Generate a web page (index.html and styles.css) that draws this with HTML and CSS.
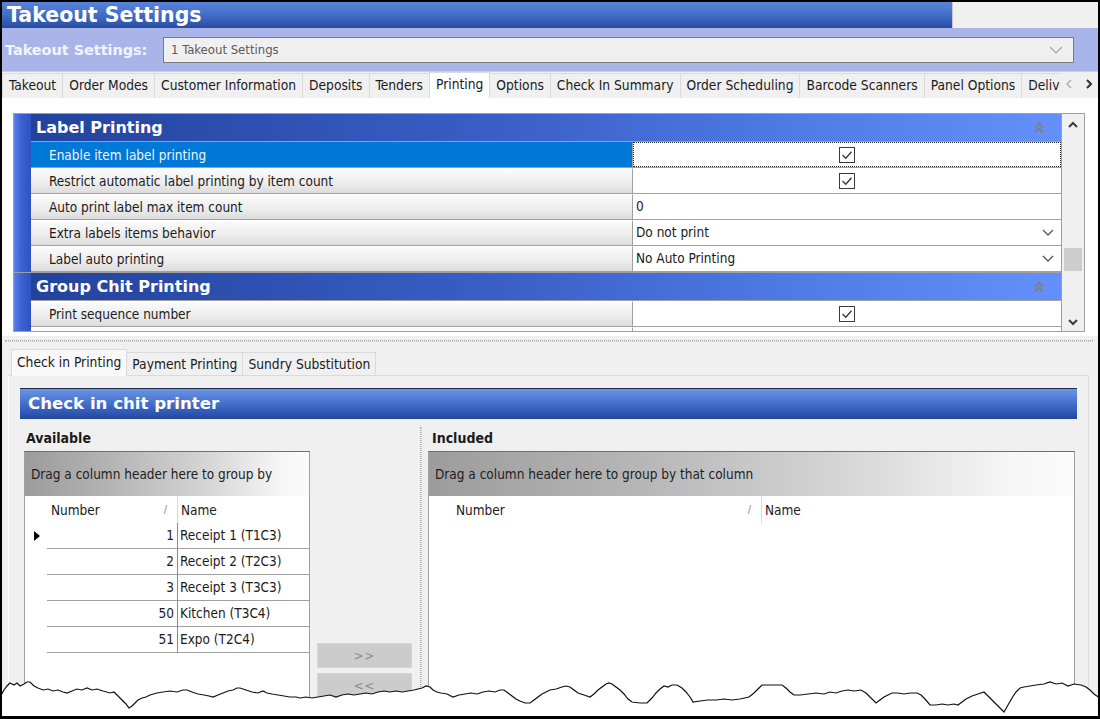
FILE: index.html
```html
<!DOCTYPE html>
<html>
<head>
<meta charset="utf-8">
<title>Takeout Settings</title>
<link rel="stylesheet" href="styles.css">
</head>
<body>
<div class="frame">
  <header class="titlebar">
    <div class="title">Takeout Settings</div>
    <div class="title-rest"></div>
  </header>

  <div class="selector">
    <span class="sel-label">Takeout Settings:</span>
    <div class="combo">
      <span class="combo-text">1 Takeout Settings</span>
      <svg class="combo-chev" width="14" height="8" viewBox="0 0 14 8"><path d="M1 1 L7 7 L13 1"/></svg>
    </div>
  </div>

  <nav class="tabbar">
    <div class="tabs">
      <div class="tab">Takeout</div>
      <div class="tab">Order Modes</div>
      <div class="tab">Customer Information</div>
      <div class="tab">Deposits</div>
      <div class="tab">Tenders</div>
      <div class="tab active">Printing</div>
      <div class="tab">Options</div>
      <div class="tab">Check In Summary</div>
      <div class="tab">Order Scheduling</div>
      <div class="tab">Barcode Scanners</div>
      <div class="tab">Panel Options</div>
      <div class="tab">Delivery</div>
    </div>
    <div class="tab-arrows">
      <svg class="arr-left" width="8" height="10" viewBox="0 0 8 10"><path d="M6 1 L2 5 L6 9"/></svg>
      <svg class="arr-right" width="8" height="10" viewBox="0 0 8 10"><path d="M2 1 L6 5 L2 9"/></svg>
    </div>
  </nav>

  <section class="top-page">
    <div class="pgrid">
      <div class="pg-main">
        <div class="pg-cat">
          <div class="gutter"></div>
          <div class="cat-title"><span>Label Printing</span>
            <svg class="collapse" width="10" height="12" viewBox="0 0 10 12"><path d="M1 5.5 L5 1.5 L9 5.5 M1 10.5 L5 6.5 L9 10.5"/></svg>
          </div>
        </div>
        <div class="pg-row selected">
          <div class="gutter"></div>
          <div class="pg-label">Enable item label printing</div>
          <div class="pg-value center"><div class="focus">
            <svg class="check" width="16" height="16" viewBox="0 0 16 16"><rect x="0.5" y="0.5" width="15" height="15"/><path d="M3.5 8 L6.8 11.2 L12.5 4.8"/></svg>
          </div></div>
        </div>
        <div class="pg-row">
          <div class="gutter"></div>
          <div class="pg-label">Restrict automatic label printing by item count</div>
          <div class="pg-value center">
            <svg class="check" width="16" height="16" viewBox="0 0 16 16"><rect x="0.5" y="0.5" width="15" height="15"/><path d="M3.5 8 L6.8 11.2 L12.5 4.8"/></svg>
          </div>
        </div>
        <div class="pg-row">
          <div class="gutter"></div>
          <div class="pg-label">Auto print label max item count</div>
          <div class="pg-value">0</div>
        </div>
        <div class="pg-row">
          <div class="gutter"></div>
          <div class="pg-label">Extra labels items behavior</div>
          <div class="pg-value drop"><span>Do not print</span>
            <svg class="dd" width="12" height="7" viewBox="0 0 12 7"><path d="M1 1 L6 6 L11 1"/></svg>
          </div>
        </div>
        <div class="pg-row">
          <div class="gutter"></div>
          <div class="pg-label">Label auto printing</div>
          <div class="pg-value drop"><span>No Auto Printing</span>
            <svg class="dd" width="12" height="7" viewBox="0 0 12 7"><path d="M1 1 L6 6 L11 1"/></svg>
          </div>
        </div>
        <div class="pg-cat sep">
          <div class="gutter"></div>
          <div class="cat-title"><span>Group Chit Printing</span>
            <svg class="collapse" width="10" height="12" viewBox="0 0 10 12"><path d="M1 5.5 L5 1.5 L9 5.5 M1 10.5 L5 6.5 L9 10.5"/></svg>
          </div>
        </div>
        <div class="pg-row">
          <div class="gutter"></div>
          <div class="pg-label">Print sequence number</div>
          <div class="pg-value center">
            <svg class="check" width="16" height="16" viewBox="0 0 16 16"><rect x="0.5" y="0.5" width="15" height="15"/><path d="M3.5 8 L6.8 11.2 L12.5 4.8"/></svg>
          </div>
        </div>
        <div class="pg-row">
          <div class="gutter"></div>
          <div class="pg-label"></div>
          <div class="pg-value"></div>
        </div>
      </div>
      <div class="vscroll">
        <svg class="sarrow" width="12" height="8" viewBox="0 0 12 8"><path d="M2 6 L6 2 L10 6"/></svg>
        <div class="strack"><div class="sthumb"></div></div>
        <svg class="sarrow" width="12" height="8" viewBox="0 0 12 8"><path d="M2 2 L6 6 L10 2"/></svg>
      </div>
    </div>
  </section>

  <div class="hsplit"><div class="dots"></div></div>

  <section class="bottom">
    <div class="btabs">
      <div class="btab active">Check in Printing</div>
      <div class="btab">Payment Printing</div>
      <div class="btab">Sundry Substitution</div>
    </div>
    <div class="bpage">
      <div class="section-head">Check in chit printer</div>
      <div class="panels">
        <div class="panel panel-left">
          <div class="panel-title">Available</div>
          <div class="panel-body">
            <div class="lgrid avail">
              <div class="gp">Drag a column header here to group by</div>
              <div class="ghead">
                <div class="ind"></div>
                <div class="hnum"><span>Number</span><span class="sort">/</span></div>
                <div class="hname">Name</div>
              </div>
              <div class="grow"><div class="ind"><svg width="6" height="10" viewBox="0 0 6 10"><path d="M0 0 L6 5 L0 10 Z"/></svg></div><div class="num">1</div><div class="name">Receipt 1 (T1C3)</div></div>
              <div class="grow"><div class="ind"></div><div class="num">2</div><div class="name">Receipt 2 (T2C3)</div></div>
              <div class="grow"><div class="ind"></div><div class="num">3</div><div class="name">Receipt 3 (T3C3)</div></div>
              <div class="grow"><div class="ind"></div><div class="num">50</div><div class="name">Kitchen (T3C4)</div></div>
              <div class="grow"><div class="ind"></div><div class="num">51</div><div class="name">Expo (T2C4)</div></div>
            </div>
            <div class="move-btns">
              <div class="mbtn">&gt;&gt;</div>
              <div class="mbtn">&lt;&lt;</div>
            </div>
          </div>
        </div>
        <div class="vsplit"><div class="vdots"></div></div>
        <div class="panel panel-right">
          <div class="panel-title">Included</div>
          <div class="lgrid incl">
            <div class="gp">Drag a column header here to group by that column</div>
            <div class="ghead">
              <div class="ind"></div>
              <div class="hnum"><span>Number</span><span class="sort">/</span></div>
              <div class="hname">Name</div>
            </div>
          </div>
        </div>
      </div>
    </div>
  </section>

  <svg class="torn" width="1100" height="719" viewBox="0 0 1100 719">
    <polygon class="torn-fill" points="0,697 4,690 7,686 10,683 14,685 17,683 20,686 24,684 27,682 30,682 34,686 38,688 43,690 48,689 53,691 58,690 63,692 67,693 72,691 77,689 82,690 87,688 92,690 97,689 103,691 110,693 114,692 118,696 122,700 126,704 129,708 132,706 135,703 138,700 142,698 146,697 150,695 157,693 163,692 170,691 177,692 183,690 187,690 192,692 198,694 204,695 209,696 213,697 218,695 223,693 228,691 233,690 237,688 240,688 246,690 252,692 258,693 263,691 267,693 272,694 278,695 284,696 290,697 296,697 300,698 306,697 312,698 318,697 324,696 330,695 336,697 342,695 348,694 354,695 360,694 366,693 372,694 378,692 384,691 390,692 396,691 402,692 408,691 414,690 418,689 422,688 426,686 430,687 433,690 437,692 441,693 447,694 453,697 459,695 465,694 471,693 477,694 483,692 489,691 495,692 500,690 504,690 508,693 512,696 516,699 520,701 525,703 530,703 534,700 538,697 542,694 546,692 550,690 556,689 562,687 566,686 570,687 574,690 578,693 584,695 590,697 594,694 598,690 602,687 606,684 609,683 612,684 616,687 620,690 624,694 628,699 632,702 640,703 647,703 652,698 656,693 660,689 664,686 668,687 672,685 677,685 682,688 686,692 690,697 693,702 700,701 708,700 716,700 724,699 732,700 740,699 749,697 754,693 758,689 762,685 770,685 778,685 782,685 786,688 790,692 794,695 800,695 808,694 816,693 824,694 830,692 836,693 842,691 848,690 854,691 861,690 866,693 871,698 876,703 880,700 884,697 888,695 892,693 898,693 904,694 910,693 917,693 921,695 925,699 930,705 936,705 942,704 948,705 954,704 958,705 962,702 966,699 972,696 978,694 984,692 988,696 992,700 996,704 1000,708 1004,712 1008,705 1012,698 1016,692 1020,688 1024,687 1030,686 1036,685 1044,684 1050,682 1056,684 1062,683 1068,686 1074,684 1081,685 1086,687 1090,690 1094,694 1100,698 1100,719 0,719"/>
    <polyline class="torn-line" points="0,697 4,690 7,686 10,683 14,685 17,683 20,686 24,684 27,682 30,682 34,686 38,688 43,690 48,689 53,691 58,690 63,692 67,693 72,691 77,689 82,690 87,688 92,690 97,689 103,691 110,693 114,692 118,696 122,700 126,704 129,708 132,706 135,703 138,700 142,698 146,697 150,695 157,693 163,692 170,691 177,692 183,690 187,690 192,692 198,694 204,695 209,696 213,697 218,695 223,693 228,691 233,690 237,688 240,688 246,690 252,692 258,693 263,691 267,693 272,694 278,695 284,696 290,697 296,697 300,698 306,697 312,698 318,697 324,696 330,695 336,697 342,695 348,694 354,695 360,694 366,693 372,694 378,692 384,691 390,692 396,691 402,692 408,691 414,690 418,689 422,688 426,686 430,687 433,690 437,692 441,693 447,694 453,697 459,695 465,694 471,693 477,694 483,692 489,691 495,692 500,690 504,690 508,693 512,696 516,699 520,701 525,703 530,703 534,700 538,697 542,694 546,692 550,690 556,689 562,687 566,686 570,687 574,690 578,693 584,695 590,697 594,694 598,690 602,687 606,684 609,683 612,684 616,687 620,690 624,694 628,699 632,702 640,703 647,703 652,698 656,693 660,689 664,686 668,687 672,685 677,685 682,688 686,692 690,697 693,702 700,701 708,700 716,700 724,699 732,700 740,699 749,697 754,693 758,689 762,685 770,685 778,685 782,685 786,688 790,692 794,695 800,695 808,694 816,693 824,694 830,692 836,693 842,691 848,690 854,691 861,690 866,693 871,698 876,703 880,700 884,697 888,695 892,693 898,693 904,694 910,693 917,693 921,695 925,699 930,705 936,705 942,704 948,705 954,704 958,705 962,702 966,699 972,696 978,694 984,692 988,696 992,700 996,704 1000,708 1004,712 1008,705 1012,698 1016,692 1020,688 1024,687 1030,686 1036,685 1044,684 1050,682 1056,684 1062,683 1068,686 1074,684 1081,685 1086,687 1090,690 1094,694 1100,698"/>
  </svg>
</div>
</body>
</html>
```

FILE: styles.css
```css
* { box-sizing: border-box; margin: 0; padding: 0; }

html, body {
  width: 1100px;
  height: 719px;
  overflow: hidden;
  background: #000;
}

body {
  font-family: "DejaVu Sans Condensed", "DejaVu Sans", sans-serif;
  font-size: 13.5px;
  color: #1b1b1b;
}

.frame {
  position: relative;
  width: 1100px;
  height: 719px;
  border: 2px solid #000;
  border-bottom-width: 3px;
  background: #f0f0f0;
  overflow: hidden;
  display: flex;
  flex-direction: column;
}

/* ---------- title bar ---------- */
.titlebar {
  height: 26px;
  flex: none;
  display: flex;
}
.title {
  width: 950px;
  background: linear-gradient(#5a84da, #4470cc 45%, #2f56ad 85%, #2a4a98);
  color: #fff;
  font-family: "DejaVu Sans", sans-serif;
  font-weight: bold;
  font-size: 20.5px;
  line-height: 26px;
  padding-left: 5px;
  white-space: nowrap;
}
.title-rest {
  flex: 1;
  background: #f0f0f0;
  border-left: 1px solid #c8c8c8;
}

/* ---------- selector band ---------- */
.selector {
  height: 44px;
  flex: none;
  background: #a9b5e9;
  display: flex;
  align-items: center;
  border-bottom: 1px solid #c6cdf0;
}
.sel-label {
  width: 161px;
  padding-left: 3px;
  font-family: "DejaVu Sans", sans-serif;
  font-weight: bold;
  font-size: 14.4px;
  color: #f2f4fd;
  white-space: nowrap;
}
.combo {
  width: 911px;
  height: 26px;
  background: #f0f0f0;
  border: 1px solid #7b7b7b;
  display: flex;
  align-items: center;
  justify-content: space-between;
  padding: 0 10px 0 7px;
  color: #5a5a5a;
  font-size: 13px;
}
.combo-chev path { fill: none; stroke: #a2a2a2; stroke-width: 1.2; }

/* ---------- main tabs ---------- */
.tabbar {
  height: 26px;
  flex: none;
  display: flex;
  background: #f0f0f0;
}
.tabs {
  width: 1058px;
  overflow: hidden;
  display: flex;
  align-items: flex-end;
  white-space: nowrap;
  font-size: 13.7px;
}
.tab {
  flex: none;
  height: 25px;
  line-height: 23px;
  padding: 0 6px;
  border: 1px solid #dadada;
  border-bottom: none;
  margin-right: -1px;
  background: #f0f0f0;
}
.tab.active {
  height: 26px;
  line-height: 22px;
  background: #fff;
  position: relative;
  z-index: 1;
}
.tab-arrows {
  flex: 1;
  display: flex;
  align-items: center;
  justify-content: space-between;
  padding: 0 5px 2px 5px;
}
.tab-arrows path { fill: none; stroke-width: 1.5; }
.arr-left path { stroke: #b0b0b0; }
.arr-right path { stroke: #303030; stroke-width: 2; }

/* ---------- top page with property grid ---------- */
.top-page {
  height: 238px;
  flex: none;
  background: #fff;
  padding: 15px 0 0 11px;
}
.pgrid {
  width: 1072px;
  height: 219px;
  border: 1px solid #a0a0a0;
  display: flex;
  overflow: hidden;
}
.pg-main {
  width: 1047px;
  flex: none;
  overflow: hidden;
}
.gutter {
  width: 17px;
  flex: none;
  background: linear-gradient(to right, #5c80ea, #3c62d4 40%, #2f52bd);
}
.pg-cat {
  display: flex;
  height: 28px;
}
.pg-cat.sep {
  height: 29px;
  border-top: 1px solid #a0a0a0;
}
.cat-title {
  flex: 1;
  display: flex;
  align-items: center;
  justify-content: space-between;
  padding: 0 17px 0 5px;
  background: linear-gradient(to right, #22439c, #3a5ec6 45%, #5381ea 80%, #6391f9);
  border-bottom: 1px solid #a0a0a0;
  color: #fff;
  font-family: "DejaVu Sans", sans-serif;
  font-weight: bold;
  font-size: 16px;
}
.collapse path { fill: none; stroke: #7d7f8a; stroke-width: 2; }

.pg-row {
  display: flex;
  height: 26px;
}
.pg-label {
  width: 602px;
  flex: none;
  padding-left: 18px;
  line-height: 25px;
  background: linear-gradient(#fbfbfb, #ececec 60%, #dcdcdc);
  border-top: 1px solid #fff;
  border-right: 1px solid #a0a0a0;
  border-bottom: 1px solid #a0a0a0;
  white-space: nowrap;
}
.pg-row.selected .pg-label {
  background: #0078d7;
  color: #eef4ff;
  border-top-color: #0078d7;
}
.pg-value {
  flex: 1;
  background: #fff;
  border-bottom: 1px solid #a0a0a0;
  padding-left: 3px;
  line-height: 25px;
  display: flex;
  align-items: center;
}
.pg-value.center { justify-content: center; padding-left: 0; }
.pg-value.drop { justify-content: space-between; padding-right: 7px; }
.focus {
  width: 100%;
  height: 100%;
  border: 1px dotted #222;
  display: flex;
  align-items: center;
  justify-content: center;
}
.check rect { fill: #fff; stroke: #3a3a3a; }
.check path { fill: none; stroke: #3a3a3a; stroke-width: 1.4; }
.dd path { fill: none; stroke: #555; stroke-width: 1.3; }

.vscroll {
  flex: 1;
  background: #f0f0f0;
  border-left: 1px solid #a0a0a0;
  display: flex;
  flex-direction: column;
  align-items: center;
  padding: 7px 0 5px;
}
.sarrow path { fill: none; stroke: #3c3c3c; stroke-width: 2; }
.strack {
  flex: 1;
  width: 100%;
  padding: 0 2px;
  display: flex;
  flex-direction: column;
  justify-content: flex-end;
  padding-bottom: 47px;
}
.sthumb {
  height: 23px;
  background: #cdcdcd;
}

/* ---------- splitter ---------- */
.hsplit {
  height: 13px;
  flex: none;
  padding: 4px 5px 0 3px;
}
.dots {
  height: 2px;
  border-top: 1px dotted #a8a8a8;
  border-bottom: 1px dotted #c8c8c8;
}

/* ---------- bottom tabs ---------- */
.bottom {
  flex: 1;
  display: flex;
  flex-direction: column;
  padding-left: 6px;
}
.btabs {
  height: 27px;
  flex: none;
  display: flex;
  align-items: flex-end;
  padding-left: 3px;
  font-size: 13.7px;
}
.btab {
  height: 24px;
  line-height: 23px;
  padding: 0 5px;
  border: 1px solid #dadada;
  border-bottom: none;
  margin-right: -1px;
  background: #f0f0f0;
  white-space: nowrap;
}
.btab.active {
  height: 27px;
  line-height: 24px;
  background: #f9f9f9;
  padding: 0 5px;
  position: relative;
  z-index: 1;
}
.bpage {
  flex: 1;
  width: 1081px;
  margin-top: -1px;
  border: 1px solid #dadada;
  border-left-color: #fff;
  background: #f0f0f0;
  padding: 12px 11px 0 11px;
}
.section-head {
  height: 31px;
  background: linear-gradient(#6a95e2, #4a76cf 40%, #2f57b3 80%, #24479c);
  border-top: 1px solid #1e2a48;
  color: #fff;
  font-family: "DejaVu Sans", sans-serif;
  font-weight: bold;
  font-size: 16.6px;
  line-height: 29px;
  padding-left: 8px;
}

.panels {
  display: flex;
  height: 400px;
}
.panel-left { width: 395px; flex: none; }
.panel-right { flex: 1; }
.panel-title {
  height: 32px;
  padding: 5px 0 0 6px;
  display: flex;
  align-items: center;
  font-weight: bold;
  font-size: 14px;
}
.panel-right .panel-title { padding-left: 4px; }
.panel-body {
  display: flex;
  padding-left: 4px;
}
.vsplit {
  width: 13px;
  flex: none;
  padding: 8px 0 0 5px;
}
.vdots {
  width: 2px;
  height: 100%;
  border-left: 1px dotted #a8a8a8;
  border-right: 1px dotted #c8c8c8;
}

.lgrid {
  background: #fff;
  border: 1px solid #a0a0a0;
  border-top-color: #6e6e6e;
  height: 300px;
}
.avail { width: 286px; flex: none; }
.incl { width: 647px; }
.gp {
  height: 44px;
  line-height: 44px;
  padding-left: 6px;
  background: linear-gradient(to right, #9c9c9c, #b4b4b4 30%, #d6d6d6 65%, #f6f6f6 90%, #fbfbfb);
  white-space: nowrap;
  overflow: hidden;
  color: #1e1e1e;
}
.ghead {
  display: flex;
  height: 27px;
  align-items: stretch;
}
.ind {
  width: 22px;
  flex: none;
  display: flex;
  align-items: center;
  justify-content: center;
  padding-left: 2px;
}
.incl .ind { width: 23px; }
.hnum {
  width: 131px;
  flex: none;
  display: flex;
  align-items: center;
  justify-content: space-between;
  padding: 0 10px 0 4px;
  border-right: 1px solid #dcdcdc;
}
.incl .hnum { width: 310px; }
.sort { color: #888; font-size: 11px; }
.hname {
  display: flex;
  align-items: center;
  padding-left: 3px;
}
.grow {
  display: flex;
  height: 26px;
}
.grow .num {
  width: 131px;
  flex: none;
  text-align: right;
  padding-right: 3px;
  line-height: 25px;
  border-right: 1px solid #8c8c8c;
  border-bottom: 1px solid #a0a0a0;
}
.grow .name {
  flex: 1;
  padding-left: 2px;
  line-height: 25px;
  border-bottom: 1px solid #a0a0a0;
  white-space: nowrap;
}
.grow .ind path { fill: #000; }

.move-btns {
  display: flex;
  flex-direction: column;
  gap: 5px;
  padding: 192px 0 0 7px;
}
.mbtn {
  width: 95px;
  height: 25px;
  background: #cccccc;
  border: 1px solid #d6d6d6;
  color: #8a8a8a;
  text-align: center;
  line-height: 23px;
  font-size: 13px;
  letter-spacing: 1px;
}

/* ---------- torn edge overlay ---------- */
.torn {
  position: absolute;
  left: -2px;
  top: -2px;
  pointer-events: none;
}
.torn-fill { fill: #fff; }
.torn-line { fill: none; stroke: #111; stroke-width: 1.2; stroke-linejoin: miter; }
```
